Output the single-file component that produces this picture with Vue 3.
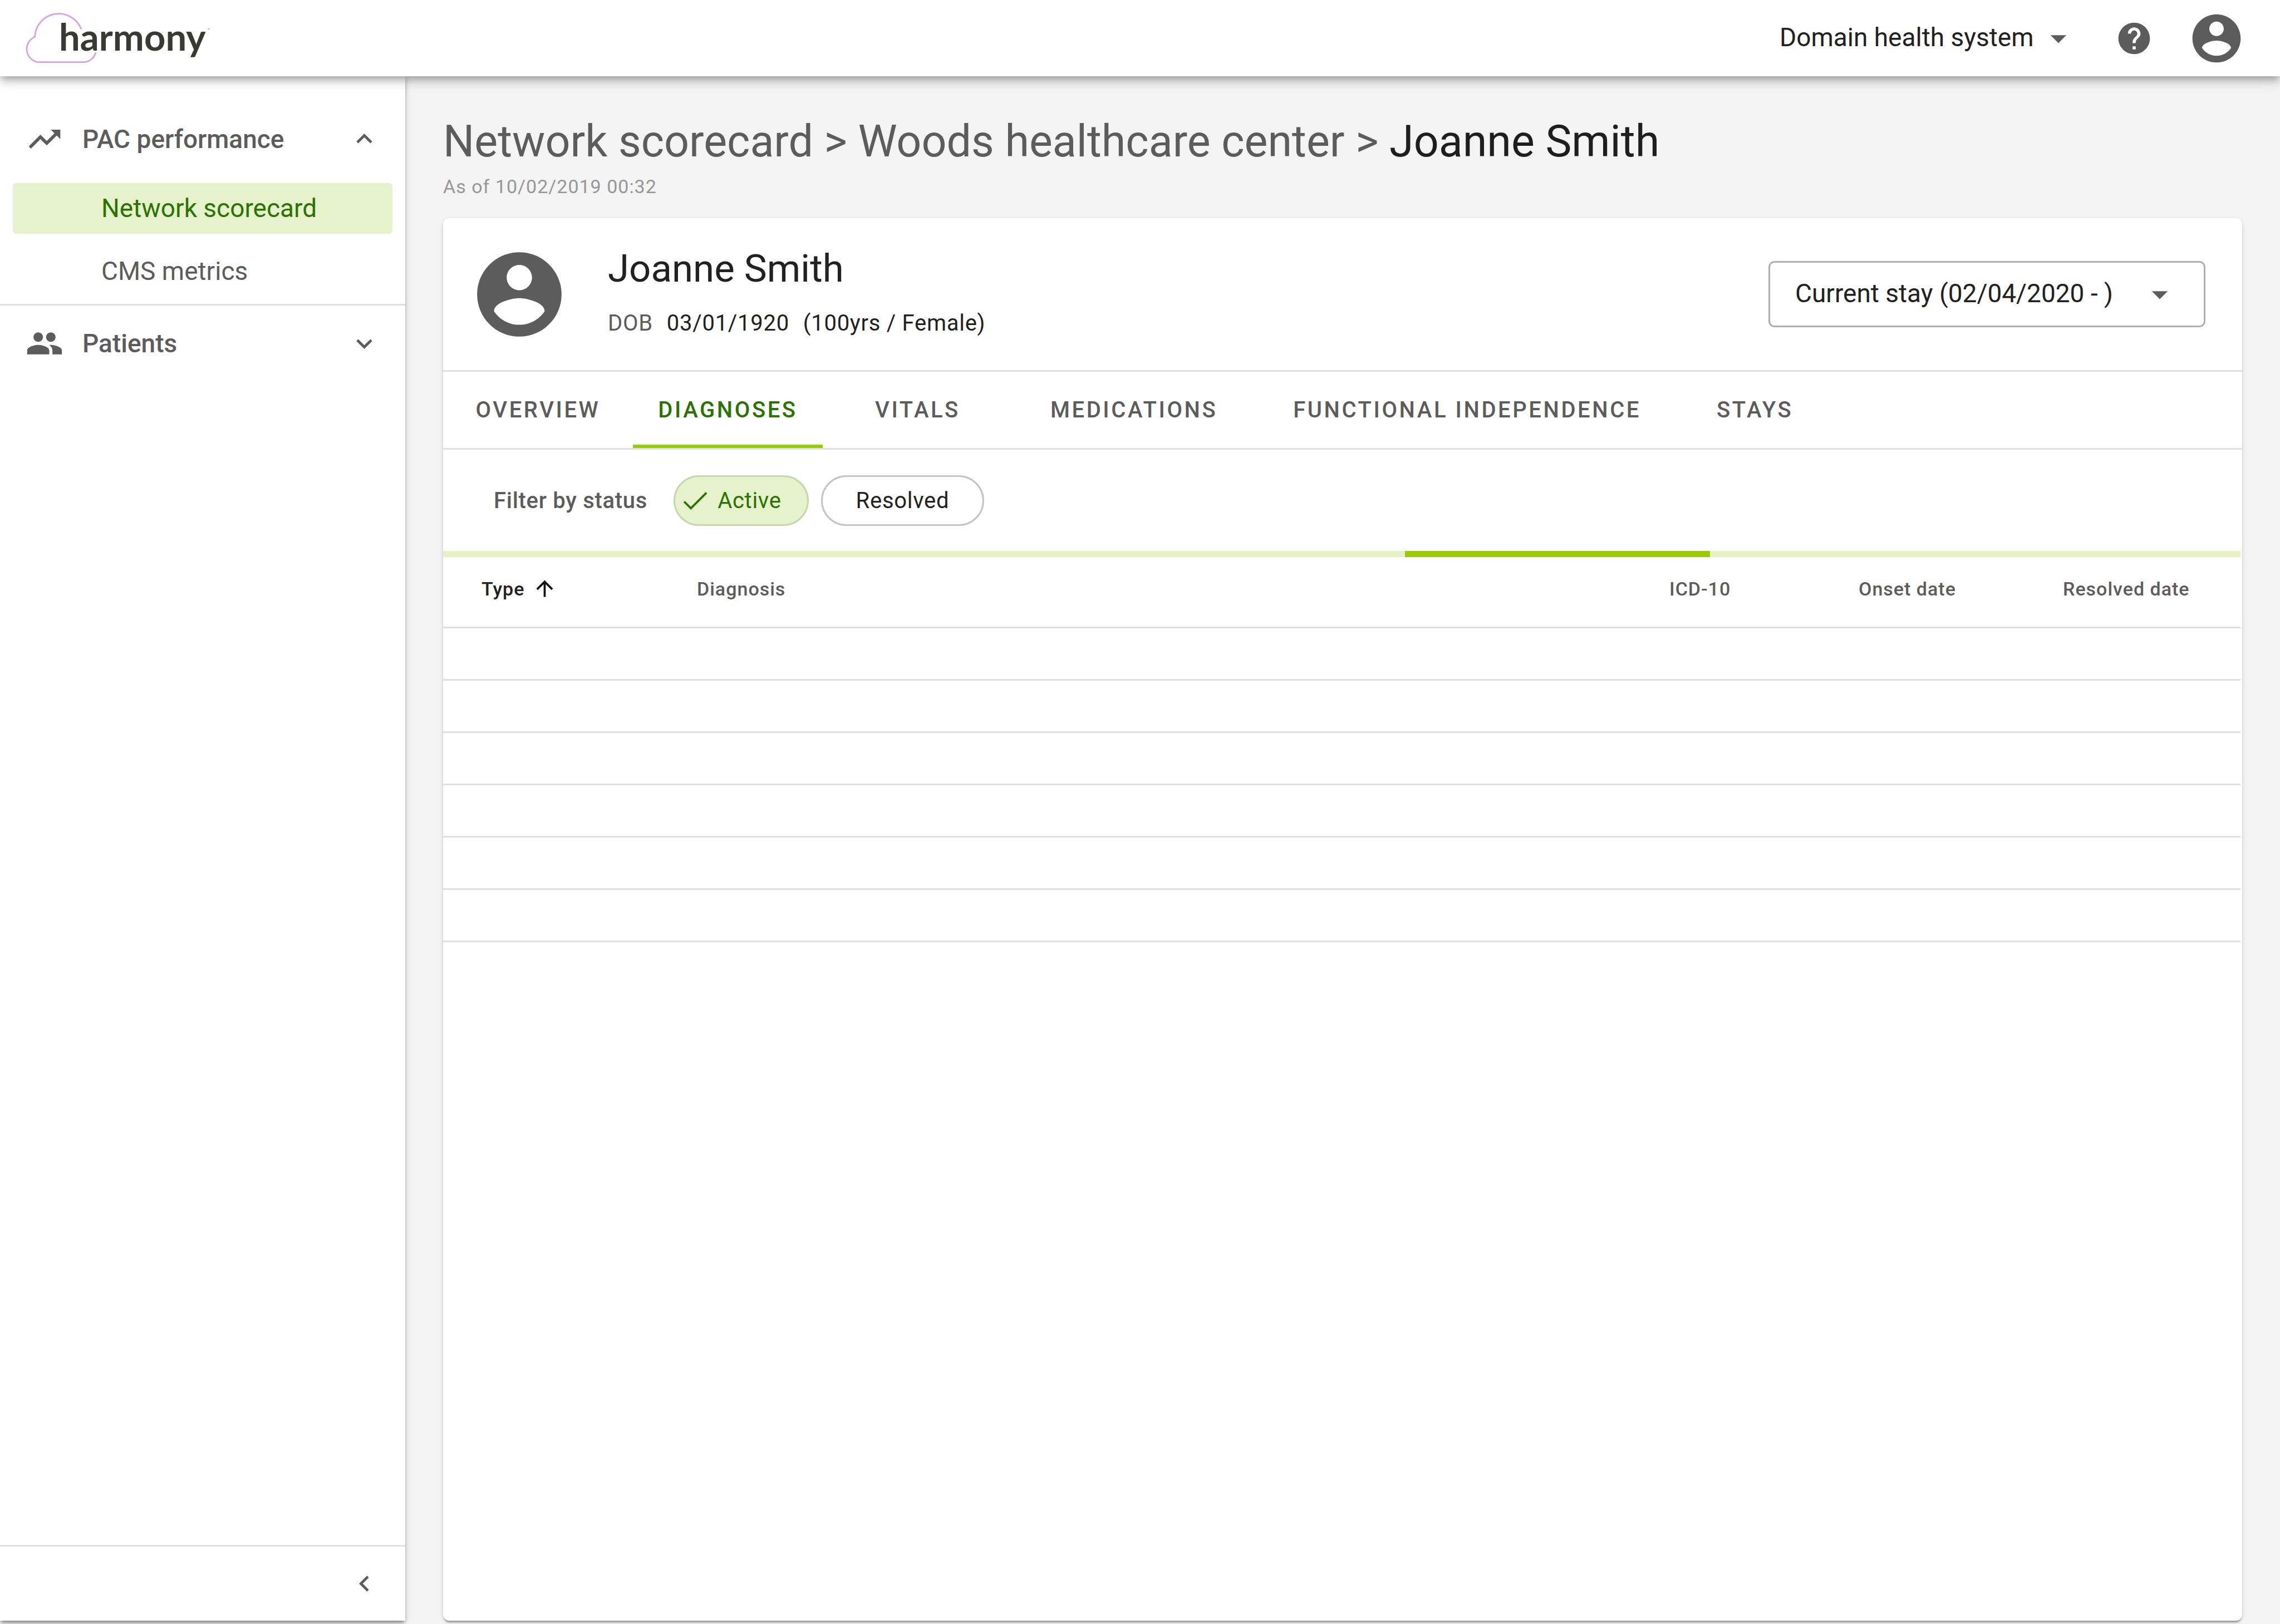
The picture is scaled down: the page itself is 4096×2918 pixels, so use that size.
<script setup>
import { ref } from 'vue'

const tabs = [
  { label: 'OVERVIEW' },
  { label: 'DIAGNOSES' },
  { label: 'VITALS' },
  { label: 'MEDICATIONS', wide: true },
  { label: 'FUNCTIONAL INDEPENDENCE', wide: true },
  { label: 'STAYS', wide: true },
]
const activeTab = ref('DIAGNOSES')
const status = ref('Active')
const progress = { left: '53.5%', width: '17%' }
const rowCount = 6
</script>

<template>
  <div class="app">
    <header class="topbar">
      <a class="logo" href="#" aria-label="harmony">
        <svg class="cloud" viewBox="0 0 140 98" aria-hidden="true">
          <path d="M109.500 31.500A46 46 0 0 0 20.500 46A25.500 25.500 0 0 0 26 94.500H115A24 24 0 0 0 137 75.500" />
        </svg>
        <span class="wordmark">harmony</span>
        <span class="tm">™</span>
      </a>
      <div class="topbar-actions">
        <div class="system">
          <select aria-label="Health system">
            <option>Domain health system</option>
          </select>
          <svg class="icon caret" viewBox="0 0 24 24" aria-hidden="true"><path d="M7 10l5 5 5-5z" /></svg>
        </div>
        <button class="icon-button" type="button" aria-label="Help">
          <svg class="icon" viewBox="0 0 24 24"><path d="M12 2C6.480 2 2 6.480 2 12s4.480 10 10 10 10-4.480 10-10S17.520 2 12 2zm1 17h-2v-2h2v2zm2.070-7.750l-.9.920C13.450 12.900 13 13.500 13 15h-2v-.5c0-1.100.450-2.100 1.170-2.830l1.240-1.260c.370-.360.590-.860.590-1.410 0-1.100-.9-2-2-2s-2 .9-2 2H8c0-2.210 1.790-4 4-4s4 1.790 4 4c0 .880-.360 1.680-.930 2.250z" /></svg>
        </button>
        <button class="icon-button" type="button" aria-label="Account">
          <svg class="account" viewBox="0 0 24 24"><path d="M12 2C6.480 2 2 6.480 2 12s4.480 10 10 10 10-4.480 10-10S17.520 2 12 2zm0 3c1.660 0 3 1.340 3 3s-1.340 3-3 3-3-1.340-3-3 1.340-3 3-3zm0 14.200c-2.500 0-4.710-1.280-6-3.220.030-1.990 4-3.080 6-3.080 1.990 0 5.970 1.090 6 3.080-1.290 1.940-3.500 3.220-6 3.220z" /></svg>
        </button>
      </div>
    </header>

    <div class="body">
      <aside class="sidebar">
        <nav>
          <section class="group">
            <button class="group-title" type="button" aria-expanded="true">
              <svg class="icon" viewBox="0 0 24 24"><path d="M16 6l2.290 2.290-4.880 4.880-4-4L2 16.590 3.410 18l6-6 4 4 6.300-6.290L22 12V6z" /></svg>
              <span>PAC performance</span>
              <svg class="chevron" viewBox="0 0 24 24"><path d="M12 8l-6 6 1.410 1.410L12 10.830l4.590 4.580L18 14z" /></svg>
            </button>
            <a class="sub active" href="#">Network scorecard</a>
            <a class="sub" href="#">CMS metrics</a>
          </section>
          <section>
            <button class="group-title tall" type="button" aria-expanded="false">
              <svg class="icon" viewBox="0 0 24 24"><path d="M16 11c1.660 0 2.990-1.340 2.990-3S17.660 5 16 5c-1.660 0-3 1.340-3 3s1.340 3 3 3zm-8 0c1.660 0 2.990-1.340 2.990-3S9.660 5 8 5C6.340 5 5 6.340 5 8s1.340 3 3 3zm0 2c-2.330 0-7 1.170-7 3.500V19h14v-2.500c0-2.330-4.670-3.500-7-3.500zm8 0c-.290 0-.620.020-.970.050 1.160.840 1.970 1.970 1.970 3.450V19h6v-2.500c0-2.330-4.670-3.500-7-3.500z" /></svg>
              <span>Patients</span>
              <svg class="chevron" viewBox="0 0 24 24"><path d="M16.590 8.590L12 13.170 7.410 8.590 6 10l6 6 6-6z" /></svg>
            </button>
          </section>
        </nav>
        <button class="collapse" type="button" aria-label="Collapse menu">
          <svg class="chevron" viewBox="0 0 24 24"><path d="M15.410 7.410L14 6l-6 6 6 6 1.410-1.410L10.830 12z" /></svg>
        </button>
      </aside>

      <main class="content">
        <h1 class="crumbs">
          <a href="#">Network scorecard</a> &gt; <a href="#">Woods healthcare center</a> &gt;
          <strong>Joanne Smith</strong>
        </h1>
        <p class="as-of">As of 10/02/2019 00:32</p>

        <section class="card">
          <div class="patient">
            <svg class="avatar" viewBox="0 0 24 24" aria-hidden="true"><path d="M12 2C6.480 2 2 6.480 2 12s4.480 10 10 10 10-4.480 10-10S17.520 2 12 2zm0 3c1.660 0 3 1.340 3 3s-1.340 3-3 3-3-1.340-3-3 1.340-3 3-3zm0 14.200c-2.500 0-4.710-1.280-6-3.220.030-1.990 4-3.080 6-3.080 1.990 0 5.970 1.090 6 3.080-1.290 1.940-3.500 3.220-6 3.220z" /></svg>
            <div class="identity">
              <h2>Joanne Smith</h2>
              <p><span class="muted">DOB</span><span>03/01/1920</span><span>(100yrs / Female)</span></p>
            </div>
            <div class="stay">
              <select aria-label="Stay">
                <option>Current stay (02/04/2020 - )</option>
              </select>
              <svg class="icon caret" viewBox="0 0 24 24" aria-hidden="true"><path d="M7 10l5 5 5-5z" /></svg>
            </div>
          </div>

          <div class="tabs" role="tablist">
            <button
              v-for="tab in tabs"
              :key="tab.label"
              type="button"
              role="tab"
              :aria-selected="tab.label === activeTab"
              :class="['tab', { wide: tab.wide, selected: tab.label === activeTab }]"
              @click="activeTab = tab.label"
            >{{ tab.label }}</button>
          </div>

          <div class="filters">
            <span class="filter-label">Filter by status</span>
            <button type="button" :class="['chip', { on: status === 'Active' }]" @click="status = 'Active'">
              <svg v-if="status === 'Active'" class="check" viewBox="-2 -3 30 30"><path d="M1.730 12.910L8.100 19.280 22.790 4.590" /></svg>Active
            </button>
            <button type="button" :class="['chip', { on: status === 'Resolved' }]" @click="status = 'Resolved'">
              <svg v-if="status === 'Resolved'" class="check" viewBox="-2 -3 30 30"><path d="M1.730 12.910L8.100 19.280 22.790 4.590" /></svg>Resolved
            </button>
          </div>

          <div class="results">
            <div class="progress" role="progressbar" aria-label="Loading diagnoses">
              <div class="progress-bar" :style="{ marginLeft: progress.left, width: progress.width }"></div>
            </div>
            <table>
              <thead>
                <tr>
                  <th class="type" aria-sort="ascending">
                    <span class="sorted">Type
                      <svg class="sort" viewBox="0 0 24 24"><path d="M4 12l1.410 1.410L11 7.830V20h2V7.830l5.580 5.590L20 12l-8-8-8 8z" /></svg>
                    </span>
                  </th>
                  <th>Diagnosis</th>
                  <th class="icd">ICD-10</th>
                  <th class="onset">Onset date</th>
                  <th class="resolved">Resolved date</th>
                </tr>
              </thead>
              <tbody>
                <tr v-for="n in rowCount" :key="n">
                  <td></td><td></td><td></td><td></td><td></td>
                </tr>
              </tbody>
            </table>
          </div>
        </section>
      </main>
    </div>
  </div>
</template>

<style>
body {
  margin: 0;
  background: #f4f4f4;
}
</style>

<style scoped>
.app {
  display: flex;
  flex-direction: column;
  min-height: 100vh;
  box-sizing: border-box;
  padding-bottom: 6px;
  overflow: hidden;
  font-family: Roboto, sans-serif;
  font-size: 46px;
  color: #212121;
}
h1, h2, p {
  margin: 0;
  font-weight: 400;
}
a {
  color: inherit;
  text-decoration: none;
}
button {
  margin: 0;
  padding: 0;
  border: 0;
  background: none;
  font: inherit;
  color: inherit;
  cursor: pointer;
}
select {
  appearance: none;
  margin: 0;
  border: 0;
  background: none;
  font: inherit;
  color: inherit;
}
svg {
  display: block;
  flex: none;
  fill: #5c5c5c;
}
.icon {
  width: 68px;
  height: 68px;
}
.chevron {
  width: 57px;
  height: 57px;
}

.topbar {
  position: relative;
  z-index: 2;
  display: flex;
  align-items: center;
  justify-content: space-between;
  height: 137px;
  padding: 0 62px 0 43px;
  background: #fff;
  box-shadow: 0 6px 11px -3px rgba(0, 0, 0, 0.2), 0 11px 14px 0 rgba(0, 0, 0, 0.14), 0 3px 28px 0 rgba(0, 0, 0, 0.12);
}
.logo {
  display: flex;
  align-items: flex-start;
}
.cloud {
  width: 132px;
  height: 92px;
  fill: none;
  stroke: #d7a3e0;
  stroke-width: 3;
}
.wordmark {
  margin-left: -69px;
  font: 700 67px/84px Lato, sans-serif;
  color: #3a3a34;
}
.tm {
  margin: 26px 0 0 3px;
  font-size: 8px;
  line-height: 12px;
  color: #8a8a8a;
}
.topbar-actions {
  display: flex;
  align-items: center;
}
.system {
  position: relative;
  margin-right: 68px;
}
.system select {
  padding: 0 78px 4px 0;
  line-height: 64px;
}
.caret {
  position: absolute;
  top: 50%;
  right: 0;
  margin-top: -34px;
  pointer-events: none;
}
.icon-button + .icon-button {
  margin-left: 62px;
}
.account {
  width: 104px;
  height: 104px;
}

.body {
  flex: 1;
  display: grid;
  grid-template-columns: 728px 1fr;
}
.sidebar {
  position: relative;
  z-index: 1;
  display: flex;
  flex-direction: column;
  justify-content: space-between;
  background: #fff;
  box-shadow: 0 6px 6px -3px rgba(0, 0, 0, 0.3), 0 3px 6px 0 rgba(0, 0, 0, 0.2), 0 3px 14px 0 rgba(0, 0, 0, 0.12);
}
.group {
  padding: 55px 0 13px;
  border-bottom: 3px solid #e0e0e0;
}
.group-title {
  display: flex;
  align-items: center;
  width: 100%;
  height: 115px;
  padding: 0 45px 0 46px;
  font-weight: 500;
  color: #5c5c5c;
}
.group-title span {
  flex: 1;
  margin-left: 34px;
  text-align: left;
}
.group-title.tall {
  height: 136px;
}
.sub {
  display: block;
  margin: 22px 23px 0;
  padding-left: 159px;
  border-radius: 6px;
  line-height: 91px;
  color: #5c5c5c;
}
.sub.active {
  background: #e6f2cb;
  color: #2b7300;
}
.collapse {
  display: flex;
  align-items: center;
  justify-content: flex-end;
  height: 136px;
  padding-right: 45px;
  border-top: 3px solid #e0e0e0;
}

.content {
  display: flex;
  flex-direction: column;
  min-width: 0;
  padding: 70px 68px 0;
}
.crumbs {
  font-size: 79px;
  line-height: 94px;
  color: #5c5c5c;
}
.crumbs strong {
  font-weight: 400;
  color: #1e1e1e;
}
.as-of {
  margin-top: 14px;
  font-size: 34px;
  line-height: 40px;
  letter-spacing: 1px;
  color: #979797;
}
.card {
  flex: 1;
  margin-top: 37px;
  border-radius: 11px;
  background: #fff;
  box-shadow: 0 6px 3px -3px rgba(0, 0, 0, 0.2), 0 3px 3px 0 rgba(0, 0, 0, 0.14), 0 3px 9px 0 rgba(0, 0, 0, 0.12);
}
.patient {
  display: flex;
  align-items: center;
  height: 273px;
  padding: 0 66px 0 46px;
  border-bottom: 3px solid #e0e0e0;
}
.avatar {
  width: 182px;
  height: 182px;
}
.identity {
  flex: 1;
  margin-left: 68px;
  padding-bottom: 10px;
}
.identity h2 {
  font-size: 69px;
  line-height: 80px;
}
.identity p {
  display: flex;
  gap: 25px;
  margin-top: 34px;
  font-size: 40px;
  line-height: 48px;
  letter-spacing: 0.0179em;
}
.muted {
  color: #5c5c5c;
}
.stay {
  position: relative;
}
.stay select {
  width: 785px;
  height: 119px;
  padding: 0 45px 3px;
  border: 3px solid #afafaf;
  border-radius: 11px;
}
.stay .caret {
  right: 48px;
}

.tabs {
  display: flex;
  height: 137px;
  border-bottom: 3px solid #e0e0e0;
}
.tab {
  width: 341px;
  border-top: 6px solid transparent;
  border-bottom: 6px solid transparent;
  font-size: 40px;
  font-weight: 500;
  letter-spacing: 0.089em;
  color: #5c5c5c;
}
.tab.wide {
  width: auto;
  padding: 0 68px;
}
.tab.selected {
  border-bottom-color: #97cb03;
  color: #2b7300;
}

.filters {
  display: flex;
  align-items: center;
  gap: 22px;
  height: 182px;
  padding-left: 91px;
  font-size: 40px;
  letter-spacing: 0.0179em;
}
.filter-label {
  margin-right: 25px;
  font-weight: 500;
  color: #5c5c5c;
}
.chip {
  display: flex;
  align-items: center;
  height: 91px;
  box-sizing: border-box;
  padding: 0 60px;
  border: 3px solid #c4c4c4;
  border-radius: 46px;
  letter-spacing: 0.0179em;
}
.chip.on {
  padding: 0 46px 0 9px;
  border-color: #c9d6ad;
  background: #e6f2cb;
  color: #2b7300;
}
.check {
  width: 57px;
  height: 57px;
  margin-right: 10px;
  fill: none;
  stroke: #2b7300;
  stroke-width: 2;
}

.results {
  margin-right: 3px;
}
.progress {
  height: 11px;
  background: #e6f2c3;
}
.progress-bar {
  height: 11px;
  background: #97cb03;
}
table {
  width: 100%;
  border-collapse: collapse;
  table-layout: fixed;
}
th {
  height: 126px;
  box-sizing: border-box;
  padding: 0 0 11px;
  border-bottom: 3px solid #e0e0e0;
  font-size: 34px;
  font-weight: 500;
  letter-spacing: 1px;
  text-align: left;
  color: #5c5c5c;
}
th.type {
  width: 456px;
  box-sizing: border-box;
  padding-left: 69px;
  color: #212121;
}
.sorted {
  display: flex;
  align-items: center;
  gap: 14px;
}
.sort {
  width: 45px;
  height: 45px;
  fill: #111;
}
th.icd {
  width: 340px;
}
th.onset {
  width: 367px;
}
th.resolved {
  width: 319px;
}
td {
  height: 94px;
  box-sizing: border-box;
  padding: 0;
  border-bottom: 3px solid #e0e0e0;
}
</style>
